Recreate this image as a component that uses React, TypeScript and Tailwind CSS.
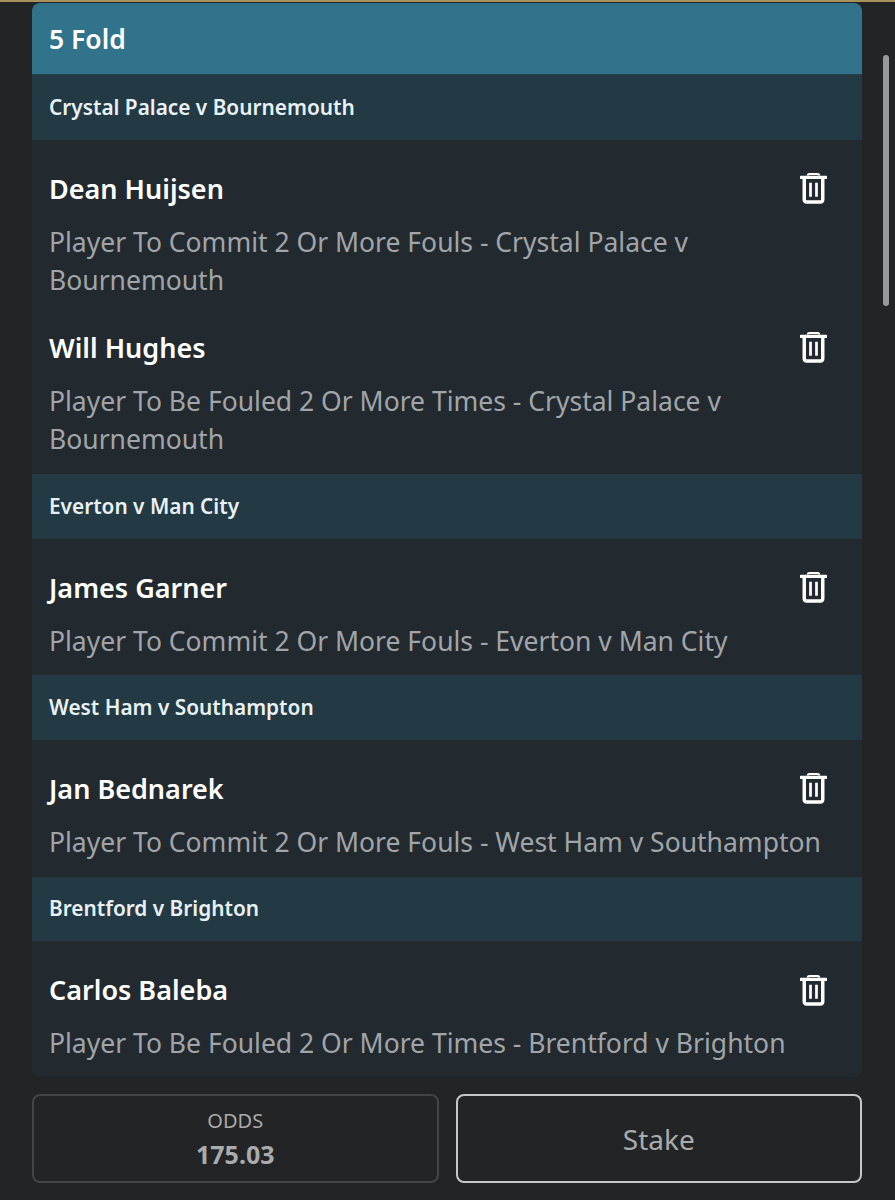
const font = { fontFamily: '"Noto Sans", "Open Sans", sans-serif' };

function Trash() {
  return (
    <svg width="27" height="31" viewBox="0 0 28 32" className="block" aria-hidden="true">
      <path d="M1 4.4H27" stroke="#fff" strokeWidth="3.4" fill="none" strokeLinecap="round" />
      <path d="M8 2.6C8 1.4 9 1 10 1H18C19 1 20 1.4 20 2.6" stroke="#fff" strokeWidth="2.2" fill="none" />
      <path d="M4.4 5V27.5C4.4 29 5.4 30 6.9 30H21.1C22.6 30 23.6 29 23.6 27.5V5" stroke="#fff" strokeWidth="3.6" fill="none" />
      <path d="M10.9 10V24.5M17.1 10V24.5" stroke="#fff" strokeWidth="2.8" fill="none" />
    </svg>
  );
}

function Item({ name, desc }: { name: string; desc: string }) {
  return (
    <div className="relative pt-[31px] px-[17px]">
      <div className="text-[27px] leading-[36px] font-semibold text-white">{name}</div>
      <div className="mt-4 text-[26.5px] leading-[38px] text-[#a1a5a9]">{desc}</div>
      <div className="absolute right-[35px] top-[33.5px]">
        <Trash />
      </div>
    </div>
  );
}

function Group({ title, items }: { title: string; items: { name: string; desc: string }[] }) {
  return (
    <section>
      <div className="flex h-[64.5px] items-center bg-[#233a44] px-[17px] text-[20.8px] font-semibold text-[#e9f1f4]">
        {title}
      </div>
      <div className={items.length > 1 ? "pb-[16.5px]" : "pb-[15.75px]"}>
        {items.map((item) => (
          <Item key={item.name} {...item} />
        ))}
      </div>
    </section>
  );
}

const groups = [
  {
    title: "Crystal Palace v Bournemouth",
    items: [
      { name: "Dean Huijsen", desc: "Player To Commit 2 Or More Fouls - Crystal Palace v Bournemouth" },
      { name: "Will Hughes", desc: "Player To Be Fouled 2 Or More Times - Crystal Palace v Bournemouth" },
    ],
  },
  { title: "Everton v Man City", items: [{ name: "James Garner", desc: "Player To Commit 2 Or More Fouls - Everton v Man City" }] },
  { title: "West Ham v Southampton", items: [{ name: "Jan Bednarek", desc: "Player To Commit 2 Or More Fouls - West Ham v Southampton" }] },
  { title: "Brentford v Brighton", items: [{ name: "Carlos Baleba", desc: "Player To Be Fouled 2 Or More Times - Brentford v Brighton" }] },
];

export default function App() {
  return (
    <div style={font} className="relative flex h-[1200px] w-[895px] flex-col overflow-hidden bg-[#232425]">
      <div className="h-[2px] bg-[#a8925a]" />
      <div className="ml-8 mt-px h-[1074px] w-[830px] overflow-hidden rounded-lg bg-[#222a30]">
        <div className="flex h-[71px] items-center bg-[#30738a] px-[17px] pt-0.5 text-[26.5px] font-semibold text-white">5 Fold</div>
        <div className="h-px bg-[#243f4e]" />
        {groups.map((g) => (
          <Group key={g.title} {...g} />
        ))}
      </div>
      <div className="ml-8 mt-[17px] grid h-[89px] w-[830px] grid-cols-2 gap-[17px]">
        <div className="flex flex-col items-center justify-center rounded-lg border-2 border-[#434446] text-[#a9abad]">
          <div className="text-[20px] leading-[26px]">ODDS</div>
          <div className="mt-1 text-[25px] leading-[32px] font-bold">175.03</div>
        </div>
        <div className="flex items-center justify-center rounded-lg border-2 border-[#c6c7c8] text-[28px] text-[#a9abad]">Stake</div>
      </div>
      <div className="absolute left-[883px] top-[55px] h-[251px] w-[6px] rounded-full bg-[#98999b]" />
    </div>
  );
}
